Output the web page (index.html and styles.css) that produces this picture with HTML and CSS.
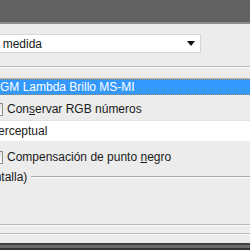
FILE: index.html
```html
<!DOCTYPE html>
<html lang="es">
<head>
  <meta charset="UTF-8">
  <title>Opciones de conversión</title>
  <link rel="stylesheet" href="styles.css">
</head>
<body>
  <div class="titlebar"></div>

  <div class="panel">
    <div class="select-row">
      <div class="select">
        <span class="select-text">A medida</span>
        <span class="select-arrow"></span>
      </div>
    </div>

    <div class="sep sep-a"></div>

    <div class="listbox">
      <div class="list-item selected">EGM Lambda Brillo MS-MI</div>
    </div>

    <label class="check-row">
      <span class="checkbox"></span>
      <span>Con<u>s</u>ervar RGB números</span>
    </label>

    <div class="field">Perceptual</div>

    <label class="check-row check-row-2">
      <span class="checkbox"></span>
      <span>Compensación de punto <u>n</u>egro</span>
    </label>

    <div class="group-title">
      <span>(Pantalla)</span>
      <span class="group-line"></span>
    </div>

    <div class="group-body"></div>

    <div class="sep sep-b"></div>
    <div class="sep sep-c"></div>
  </div>

  <div class="bottombar"></div>
</body>
</html>
```

FILE: styles.css
```css
html, body {
  margin: 0;
  padding: 0;
  width: 250px;
  height: 250px;
  overflow: hidden;
}

body {
  background: #ececec;
  font-family: "Liberation Sans", Arial, sans-serif;
  font-size: 12px;
  color: #1a1a1a;
  display: flex;
  flex-direction: column;
}

.titlebar {
  height: 22px;
  background: #626262;
  border-bottom: 2px solid #8d8d8d;
  flex-shrink: 0;
}

.panel {
  flex: 1;
  display: flex;
  flex-direction: column;
  margin-left: -10px;
}

/* Dropdown */
.select-row {
  padding-top: 10px;
}
.select {
  width: 210px;
  height: 17px;
  background: #fff;
  border: 1px solid #d6d6d6;
  border-left: none;
  display: flex;
  align-items: center;
  justify-content: space-between;
}
.select-text {
  padding-left: 2px;
}
.select-arrow {
  width: 0;
  height: 0;
  border-left: 4px solid transparent;
  border-right: 4px solid transparent;
  border-top: 5px solid #111;
  margin-right: 5px;
}

.sep {
  height: 1px;
  background: #b9b9b9;
  border-bottom: 1px solid #f8f8f8;
}
.sep-a {
  margin-top: 13px;
}

/* List with selected profile */
.listbox {
  margin-top: 10px;
  border-top: 1px solid #b5b5b5;
  background: #fff;
}
.list-item {
  height: 14px;
  line-height: 14px;
  padding-left: 2px;
}
.list-item.selected {
  background: #3399ff;
  color: #fff;
  border-top: 1px dotted #a08a60;
  border-bottom: 1px dotted #a08a60;
}

/* Checkboxes */
.check-row {
  display: flex;
  align-items: center;
  gap: 4px;
  height: 16px;
  margin-top: 6px;
}
.checkbox {
  width: 11px;
  height: 11px;
  border: 1px solid #8e8e8e;
  background: linear-gradient(#e4e4e4, #fafafa);
  flex-shrink: 0;
}

/* Intent field */
.field {
  margin-top: 3px;
  height: 20px;
  line-height: 20px;
  background: #fff;
  border-top: 1px solid #e2e2e2;
}

.check-row-2 {
  margin-top: 8px;
}

/* Group box title */
.group-title {
  display: flex;
  align-items: center;
  gap: 4px;
  margin-top: 4px;
  height: 16px;
  margin-left: -14px;
}
.group-line {
  flex: 1;
  height: 1px;
  background: #a9a9a9;
  border-bottom: 1px solid #fafafa;
}

.group-body {
  height: 39px;
}

.sep-c {
  margin-top: 7px;
}

.bottombar {
  height: 3px;
  background: #6c6c6c;
  border-top: 2px solid #3f3f3f;
  border-bottom: 2px solid #353535;
  flex-shrink: 0;
}
```
